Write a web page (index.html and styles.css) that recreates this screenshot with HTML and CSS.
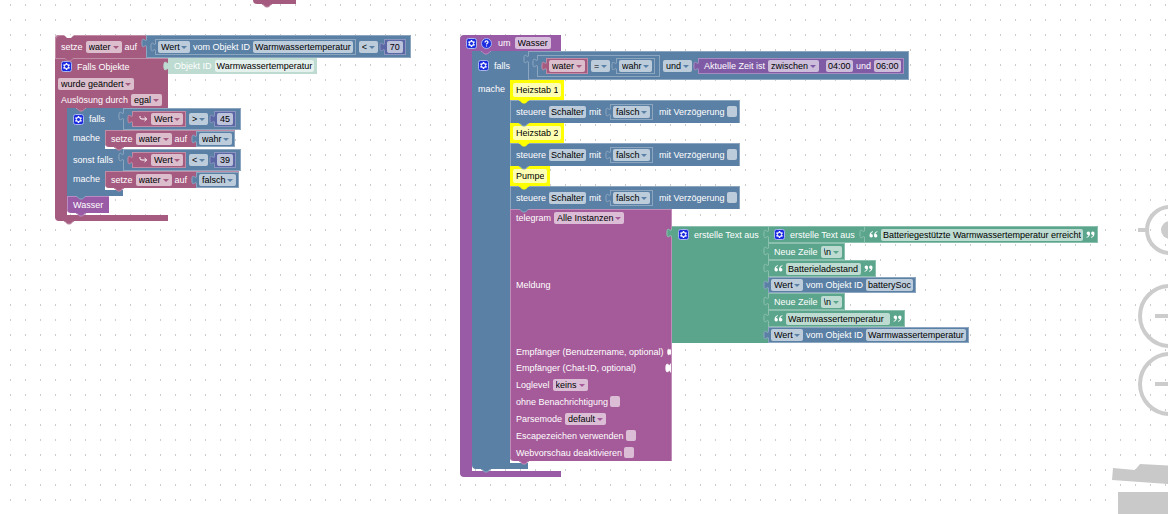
FILE: index.html
```html
<!DOCTYPE html>
<html lang="de">
<head>
<meta charset="utf-8">
<title>Blockly</title>
<link rel="stylesheet" href="styles.css">
</head>
<body>
<svg class="defs" aria-hidden="true">
  <symbol id="tab" viewBox="0 0 6 10"><path class="shape" d="M6 .7H5.500c0 5.700-4.600-4.600-4.600 4.300s4.600-1.400 4.600 4.300H6Z"/><path class="edge" d="M5.500 .7c0 5.700-4.600-4.600-4.600 4.300s4.600-1.400 4.600 4.300"/></symbol>
  <symbol id="bump" viewBox="0 0 10 4"><path class="shape" d="M0 0H10V.5H9L6.500 3H3.500L1 .5H0Z"/><path class="edge" d="M0 .5H1L3.500 3H6.500L9 .5H10"/></symbol>
  <symbol id="gear" viewBox="0 0 11 11"><rect x=".5" y=".5" width="10" height="10" rx="2" fill="#1a2be0" stroke="#a9b4ee"/><path d="M5.500 2V9M2.500 3.750L8.500 7.250M8.500 3.750L2.500 7.250" stroke="#fff" stroke-width="1.500"/><circle cx="5.500" cy="5.500" r="2.100" fill="#1a2be0" stroke="#fff" stroke-width="1"/></symbol>
  <symbol id="help" viewBox="0 0 11 11"><circle cx="5.500" cy="5.500" r="5" fill="#1a2be0" stroke="#a9b4ee"/><path d="M4 4.500C4 2.400 7 2.500 7 4.300C7 5.400 5.500 5.300 5.500 6.600M5.500 7.400V8.500" fill="none" stroke="#fff" stroke-width="1.200"/></symbol>
  <symbol id="ret" viewBox="0 0 9 8"><path d="M1 1V2.500Q1 4 3 4H7.500M5.500 2L7.700 4L5.500 6" fill="none" stroke="#fff" stroke-width="1"/></symbol>
  <symbol id="lq" viewBox="0 0 9 7"><path d="M4 .3Q.5 1 .5 4.500A1.700 1.700 0 1 0 2 3Q2 1.600 4 1ZM8.500 .3Q5 1 5 4.500A1.700 1.700 0 1 0 6.500 3Q6.500 1.600 8.500 1Z" fill="#fff"/></symbol>
</svg>

<main class="workspace">
  <div class="stack stub pink"><svg class="bump"><use href="#bump"/></svg></div>

  <section class="stack left">
    <div class="stmt first pink tall">
      <span>setze</span><span class="dd"><select aria-label="Variable"><option>water</option></select></span><span>auf</span>
      <div class="val blue outer">
        <svg class="tab"><use href="#tab"/></svg>
        <div class="val blue"><svg class="tab"><use href="#tab"/></svg><span class="dd"><select aria-label="Attribut"><option>Wert</option></select></span><span>vom Objekt ID</span><button class="field">Warmwassertemperatur</button></div>
        <span class="dd"><select aria-label="Vergleich"><option>&lt;</option></select></span>
        <div class="val indigo"><svg class="tab"><use href="#tab"/></svg><input class="field num" value="70" aria-label="Zahl"></div>
      </div>
      <svg class="bump"><use href="#bump"/></svg>
    </div>

    <div class="cblock pink">
      <div class="head">
        <div class="cell event">
          <div class="line"><svg class="icon"><use href="#gear"/></svg><span>Falls Objekte</span></div>
          <div class="line tight"><span class="dd"><select aria-label="Bedingung"><option>wurde geändert</option></select></span></div>
          <div class="line short"><span>Auslösung durch</span><span class="dd"><select aria-label="Auslösung durch"><option>egal</option></select></span></div>
        </div>
        <div class="val mint flush objid"><svg class="tab"><use href="#tab"/></svg><span>Objekt ID</span><button class="field">Warmwassertemperatur</button></div>
      </div>
      <div class="arm">
        <div class="strip"></div>
        <div class="column">
          <div class="cblock blue">
            <svg class="bump notch pink"><use href="#bump"/></svg>
            <div class="head">
              <div class="cell cond"><svg class="icon"><use href="#gear"/></svg><span>falls</span></div>
              <div class="val blue outer flush"><svg class="tab"><use href="#tab"/></svg>
                <div class="val pink ext"><svg class="tab"><use href="#tab"/></svg><svg class="ret"><use href="#ret"/></svg><span class="dd"><select aria-label="Attribut"><option>Wert</option></select></span></div>
                <span class="dd"><select aria-label="Vergleich"><option>&gt;</option></select></span>
                <div class="val indigo"><svg class="tab"><use href="#tab"/></svg><input class="field num" value="45" aria-label="Zahl"></div>
              </div>
            </div>
            <div class="arm">
              <div class="cell do">mache</div>
              <div class="column">
                <div class="stmt last pink"><span>setze</span><span class="dd"><select aria-label="Variable"><option>water</option></select></span><span>auf</span>
                  <div class="val blue"><svg class="tab"><use href="#tab"/></svg><span class="dd"><select aria-label="Wert"><option>wahr</option></select></span></div>
                  <svg class="bump"><use href="#bump"/></svg></div>
              </div>
            </div>
            <div class="head">
              <div class="cell cond"><span>sonst falls</span></div>
              <div class="val blue outer flush"><svg class="tab"><use href="#tab"/></svg>
                <div class="val pink ext"><svg class="tab"><use href="#tab"/></svg><svg class="ret"><use href="#ret"/></svg><span class="dd"><select aria-label="Attribut"><option>Wert</option></select></span></div>
                <span class="dd"><select aria-label="Vergleich"><option>&lt;</option></select></span>
                <div class="val indigo"><svg class="tab"><use href="#tab"/></svg><input class="field num" value="39" aria-label="Zahl"></div>
              </div>
            </div>
            <div class="arm">
              <div class="cell do">mache</div>
              <div class="column">
                <div class="stmt last pink"><span>setze</span><span class="dd"><select aria-label="Variable"><option>water</option></select></span><span>auf</span>
                  <div class="val blue"><svg class="tab"><use href="#tab"/></svg><span class="dd"><select aria-label="Wert"><option>falsch</option></select></span></div>
                  <svg class="bump"><use href="#bump"/></svg></div>
              </div>
            </div>
            <div class="foot inner"><svg class="bump"><use href="#bump"/></svg></div>
          </div>
          <div class="stmt last purple call"><span>Wasser</span><svg class="bump"><use href="#bump"/></svg></div>
        </div>
      </div>
      <div class="foot wide"><svg class="bump"><use href="#bump"/></svg></div>
    </div>
  </section>

  <section class="stack right">
    <div class="cblock purple">
      <div class="cell proc"><svg class="icon"><use href="#gear"/></svg><svg class="icon"><use href="#help"/></svg><span>um</span><input class="field name" value="Wasser" aria-label="Funktionsname"></div>
      <div class="arm">
        <div class="strip"></div>
        <div class="column">
          <div class="cblock blue">
            <svg class="bump notch purple"><use href="#bump"/></svg>
            <div class="head">
              <div class="cell cond"><svg class="icon"><use href="#gear"/></svg><span>falls</span></div>
              <div class="val blue outer flush big"><svg class="tab"><use href="#tab"/></svg>
                <div class="val blue outer"><svg class="tab"><use href="#tab"/></svg>
                  <div class="val pink"><svg class="tab"><use href="#tab"/></svg><span class="dd"><select aria-label="Variable"><option>water</option></select></span></div>
                  <span class="dd"><select aria-label="Vergleich"><option>=</option></select></span>
                  <div class="val blue"><svg class="tab"><use href="#tab"/></svg><span class="dd"><select aria-label="Wert"><option>wahr</option></select></span></div>
                </div>
                <span class="dd"><select aria-label="Verknüpfung"><option>und</option></select></span>
                <div class="val violet time"><svg class="tab"><use href="#tab"/></svg><span>Aktuelle Zeit ist</span><span class="dd"><select aria-label="Zeitvergleich"><option>zwischen</option></select></span><input class="field clock from" value="04:00" aria-label="von"><span>und</span><input class="field clock" value="06:00" aria-label="bis"></div>
              </div>
            </div>
            <div class="arm">
              <div class="cell do top">mache</div>
              <div class="column">
                <div class="stmt note"><input class="field" value="Heizstab 1" aria-label="Kommentar"><svg class="bump"><use href="#bump"/></svg></div>
                <div class="stmt blue tall control"><span>steuere</span><button class="field">Schalter</button><span>mit</span><div class="val blue"><svg class="tab"><use href="#tab"/></svg><span class="dd"><select aria-label="Wert"><option>falsch</option></select></span></div><label>mit Verzögerung<input type="checkbox"></label><svg class="bump"><use href="#bump"/></svg></div>
                <div class="stmt note"><input class="field" value="Heizstab 2" aria-label="Kommentar"><svg class="bump"><use href="#bump"/></svg></div>
                <div class="stmt blue tall control"><span>steuere</span><button class="field">Schalter</button><span>mit</span><div class="val blue"><svg class="tab"><use href="#tab"/></svg><span class="dd"><select aria-label="Wert"><option>falsch</option></select></span></div><label>mit Verzögerung<input type="checkbox"></label><svg class="bump"><use href="#bump"/></svg></div>
                <div class="stmt note narrow"><input class="field" value="Pumpe" aria-label="Kommentar"><svg class="bump"><use href="#bump"/></svg></div>
                <div class="stmt blue tall control"><span>steuere</span><button class="field">Schalter</button><span>mit</span><div class="val blue"><svg class="tab"><use href="#tab"/></svg><span class="dd"><select aria-label="Wert"><option>falsch</option></select></span></div><label>mit Verzögerung<input type="checkbox"></label><svg class="bump"><use href="#bump"/></svg></div>

                <div class="telegram magenta">
                  <div class="line"><label for="inst">telegram</label><span class="dd"><select id="inst"><option>Alle Instanzen</option></select></span></div>
                  <div class="message">
                    <span class="caption">Meldung</span>
                    <div class="join green"><svg class="tab"><use href="#tab"/></svg>
                      <div class="joinbody"><div class="joinhead"><svg class="icon"><use href="#gear"/></svg><span>erstelle Text aus</span></div></div>
                      <div class="column">
                        <div class="val green flush item"><svg class="tab"><use href="#tab"/></svg><svg class="icon"><use href="#gear"/></svg><span>erstelle Text aus</span>
                          <div class="val green quoted"><svg class="tab"><use href="#tab"/></svg><svg class="quote"><use href="#lq"/></svg><input class="field t1" value="Batteriegestützte Warmwassertemperatur erreicht" aria-label="Text"><svg class="quote close"><use href="#lq"/></svg></div></div>
                        <div class="val green flush item"><svg class="tab"><use href="#tab"/></svg><span>Neue Zeile</span><span class="dd"><select aria-label="Neue Zeile"><option>\n</option></select></span></div>
                        <div class="val green flush item"><svg class="tab"><use href="#tab"/></svg><svg class="quote"><use href="#lq"/></svg><input class="field t2" value="Batterieladestand" aria-label="Text"><svg class="quote close"><use href="#lq"/></svg></div>
                        <div class="val blue flush"><svg class="tab"><use href="#tab"/></svg><span class="dd"><select aria-label="Attribut"><option>Wert</option></select></span><span>vom Objekt ID</span><button class="field">batterySoc</button></div>
                        <div class="val green flush item"><svg class="tab"><use href="#tab"/></svg><span>Neue Zeile</span><span class="dd"><select aria-label="Neue Zeile"><option>\n</option></select></span></div>
                        <div class="val green flush item"><svg class="tab"><use href="#tab"/></svg><svg class="quote"><use href="#lq"/></svg><input class="field t3" value="Warmwassertemperatur " aria-label="Text"><svg class="quote close"><use href="#lq"/></svg></div>
                        <div class="val blue flush"><svg class="tab"><use href="#tab"/></svg><span class="dd"><select aria-label="Attribut"><option>Wert</option></select></span><span>vom Objekt ID</span><button class="field">Warmwassertemperatur</button></div>
                      </div>
                    </div>
                  </div>
                  <div class="line"><span>Empfänger (Benutzername, optional)</span><svg class="socket"><use href="#tab"/></svg></div>
                  <div class="line short"><span>Empfänger (Chat-ID, optional)</span><svg class="socket"><use href="#tab"/></svg></div>
                  <div class="line"><label for="log">Loglevel</label><span class="dd"><select id="log"><option>keins</option></select></span></div>
                  <div class="line"><label>ohne Benachrichtigung<input type="checkbox"></label></div>
                  <div class="line"><label for="parse">Parsemode</label><span class="dd"><select id="parse"><option>default</option></select></span></div>
                  <div class="line"><label>Escapezeichen verwenden<input type="checkbox"></label></div>
                  <div class="line"><label>Webvorschau deaktivieren<input type="checkbox"></label></div>
                  <svg class="bump"><use href="#bump"/></svg>
                </div>
              </div>
            </div>
            <div class="foot inner end"><svg class="bump"><use href="#bump"/></svg></div>
          </div>
        </div>
      </div>
      <div class="foot procfoot"></div>
    </div>
  </section>

  <nav class="zoom" aria-label="Ansicht">
    <button aria-label="Zentrieren"><svg width="64" height="64" viewBox="0 0 64 64"><circle cx="32" cy="32" r="23" fill="none" stroke="#ccc" stroke-width="4"/><circle cx="32" cy="32" r="9" fill="#ccc"/><path d="M0 32H9M55 32H64M32 0V9M32 55V64" stroke="#ccc" stroke-width="4"/></svg></button>
    <button aria-label="Vergrößern" class="plus"><svg width="64" height="64" viewBox="0 0 64 64"><circle cx="32" cy="32" r="30" fill="none" stroke="#ccc" stroke-width="4"/><path d="M17 32H47M32 17V47" stroke="#ccc" stroke-width="4"/></svg></button>
    <button aria-label="Verkleinern"><svg width="64" height="64" viewBox="0 0 64 64"><circle cx="32" cy="32" r="30" fill="none" stroke="#ccc" stroke-width="4"/><path d="M17 32H47" stroke="#ccc" stroke-width="4"/></svg></button>
  </nav>
  <svg class="trash" width="116" height="60" viewBox="0 0 116 60" role="img" aria-label="Papierkorb"><path d="M1 4L23 6L28 0L85 3L88 10L114 12V24L56 20L0 16ZM6 28H110V60H6Z" fill="#c9c9c9"/></svg>
</main>
</body>
</html>
```
FILE: styles.css
```css
* { box-sizing: border-box; }

body {
  margin: 0;
  font: 9px/12px "Liberation Sans", Arial, sans-serif;
  color: #fff;
}

.defs { position: absolute; width: 0; height: 0; }

.workspace {
  position: relative;
  min-height: 100vh;
  overflow: hidden;
  background: conic-gradient(from 90deg at 14px 13px, #ccc 90deg, #fff 0) -4px -9px / 15px 15px;
}

/* colour families */
.pink { --c: #a55b80; --l: #c08ca6; --f: #dbbdcc; }
.blue { --c: #5b80a5; --l: #8ca6c0; --f: #bdccdb; }
.indigo { --c: #5b67a5; --l: #8c95c0; --f: #bdc2db; }
.green { --c: #5ba58c; --l: #8cc0ae; --f: #bddbd1; }
.mint { --c: #bddbd1; --l: #bddbd1; --f: #e5f1ed; }
.purple { --c: #995ba5; --l: #b88cc0; --f: #d6bddb; }
.violet { --c: #805ba5; --l: #a68cc0; --f: #ccbddb; }
.magenta { --c: #a55b99; --l: #c08cb8; --f: #dbbdd6; }
.note { --c: #ffff00; --l: #ffff00; --f: #ffffb3; }

.stack { position: absolute; white-space: nowrap; }
.left { left: 55px; top: 35px; }
.right { left: 460px; top: 35px; }
.stub {
  left: 253px;
  top: 0;
  width: 43px;
  height: 4px;
  background: var(--c);
  border-radius: 0 0 0 4px;
}

/* connectors */
.shape { fill: var(--c); }
.edge { fill: none; stroke: var(--l); stroke-width: 1; }
.tab { position: absolute; left: -6px; top: 2px; width: 6px; height: 10px; z-index: 2; }
.bump { position: absolute; left: 9px; bottom: -4px; width: 10px; height: 4px; z-index: 3; }
.notch { top: 0; bottom: auto; }
.socket { --c: #fff; --l: #fff; width: 6px; height: 10px; margin-left: auto; }

/* fields */
select, .field {
  display: block;
  height: 12px;
  margin: 0;
  padding: 0 2px;
  border: 0;
  border-radius: 2px;
  background: var(--f);
  color: #000;
  font: inherit;
  outline: 0;
}
select { appearance: none; padding: 0 10px 0 3px; }
.dd { position: relative; display: block; }
.dd::after {
  content: "";
  position: absolute;
  right: 3px;
  top: 5px;
  border: 3px solid transparent;
  border-top-color: var(--c);
  border-bottom: 0;
  pointer-events: none;
}
.num { width: 16px; padding: 0 3px; }
.name { width: 36px; padding: 0 3px; }
.clock { width: 27px; }
.from { margin-left: 4px; }
.t1 { width: 202px; }
.t2 { width: 75px; }
.t3 { width: 104px; }
label { display: flex; align-items: center; gap: 2px; }
input[type="checkbox"] {
  appearance: none;
  width: 10px;
  height: 11px;
  margin: 0;
  border-radius: 2px;
  background: var(--f);
}

.icon { width: 11px; height: 11px; flex: none; }
.icon + span { margin-left: 2px; }
.ret { width: 9px; height: 8px; margin-left: 3px; }
.quote { width: 9px; height: 7px; }
.close { transform: rotate(180deg); }

/* value blocks */
.val {
  position: relative;
  display: flex;
  align-items: center;
  gap: 3px;
  min-height: 16px;
  margin-left: 4px;
  padding: 0 2px;
  border: 1px solid var(--l);
  background: var(--c);
}
.outer { min-height: 22px; padding: 2px 4px 2px 0; }
.outer > .tab + .val { margin-left: 8px; }
.ext { padding-left: 3px; }
.big { min-height: 29px; }
span + .val { margin-left: 6px; }
.dd + .val { margin-left: 3px; }
.control > .val { margin-left: 6px; }
.control > label { margin-left: 3px; }
.val.flush { margin-left: 0; }
.objid { padding-left: 5px; }
.time { padding-left: 5px; }
.item { min-height: 17px; padding-left: 5px; }
.item .quoted { margin: -1px -3px -1px 6px; min-height: 17px; }
.quoted { padding-left: 4px; }

/* statement blocks */
.stmt {
  position: relative;
  display: flex;
  align-items: center;
  gap: 3px;
  min-height: 17px;
  padding-left: 6px;
  background: var(--c);
  box-shadow: inset 1px 1px var(--l);
}
.tall { min-height: 23px; }
.tall > .outer { min-height: 23px; }
.first { border-top-left-radius: 4px; }
.first::before {
  content: "";
  position: absolute;
  left: 9px;
  top: 0;
  width: 10px;
  height: 3px;
  background: #fff;
  clip-path: polygon(0 0, 100% 0, 70% 100%, 30% 100%);
}
.last { border-bottom-left-radius: 4px; }
.call { padding-right: 6px; }
.note { min-height: 20px; padding: 3px; width: 54px; }
.note .field { width: 100%; height: 14px; padding: 0 3px; }
.narrow { width: 40px; }
.control { padding-right: 2px; }
.control, .telegram { border-right: 1px solid var(--l); }

.cblock { position: relative; display: flex; flex-direction: column; align-items: flex-start; }
.head, .arm { display: flex; }
.head { align-items: flex-start; }
.column { display: flex; flex-direction: column; align-items: flex-start; padding-bottom: 2px; }
.strip { width: 12px; background: var(--c); }
.cell { background: var(--c); }
.event { width: 113px; box-shadow: inset 0 1px var(--l); }
.line { display: flex; align-items: center; gap: 3px; height: 17px; padding-left: 6px; }
.tight { padding-left: 3px; }
.short { height: 16px; }
.cond {
  display: flex;
  align-items: center;
  align-self: stretch;
  gap: 3px;
  width: 56px;
  padding-left: 6px;
}
.do { display: flex; align-items: center; width: 38px; padding: 0 0 3px 6px; }
.top { align-items: flex-start; padding-top: 3px; }
.foot { position: relative; height: 6px; background: var(--c); }
.inner { width: 56px; }
.end { border-bottom-left-radius: 4px; }
.wide { width: 113px; border-bottom-left-radius: 4px; }
.proc {
  display: flex;
  align-items: center;
  gap: 4px;
  width: 101px;
  height: 16px;
  padding-left: 6px;
  border-top-left-radius: 4px;
}
.procfoot { width: 101px; border-bottom-left-radius: 4px; }

/* telegram block */
.telegram {
  position: relative;
  width: 162px;
  background: var(--c);
  box-shadow: inset 1px 1px var(--l);
  border-bottom-left-radius: 4px;
}
.message { display: flex; align-items: center; }
.caption { flex: none; width: 162px; padding-left: 6px; }
.join { position: relative; display: flex; }
.join .column { padding: 0; }
.joinbody { width: 96px; background: var(--c); box-shadow: inset 0 1px var(--l); }
.joinhead { display: flex; align-items: center; gap: 3px; height: 17px; padding-left: 6px; }

/* workspace controls */
.zoom { position: absolute; right: -34px; top: 198px; display: flex; flex-direction: column; gap: 4px; }
.zoom button { display: block; width: 64px; height: 64px; padding: 0; border: 0; background: none; }
.zoom .plus { margin-top: 18px; }
.trash { position: absolute; right: -60px; top: 464px; }
```
